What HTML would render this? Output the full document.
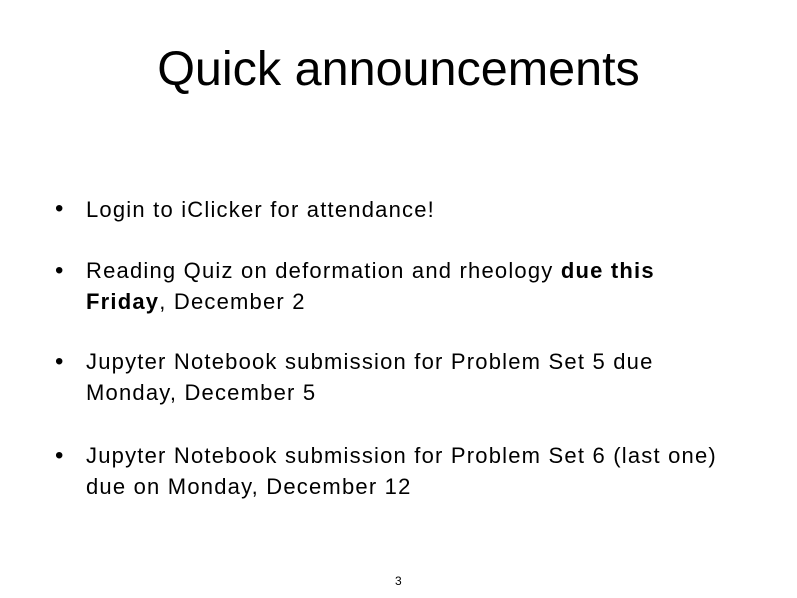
<!DOCTYPE html>
<html><head><meta charset="utf-8"><style>
html,body{margin:0;padding:0;background:#fff;}
body{width:797px;height:598px;position:relative;overflow:hidden;color:#000;}
.title{position:absolute;left:0;width:797px;top:41px;text-align:center;font-family:"Liberation Sans",sans-serif;font-size:48.5px;line-height:56px;}
.b{position:absolute;left:86px;font-family:"Liberation Sans",sans-serif;font-size:22px;letter-spacing:1.2px;line-height:31px;width:700px;}
.dot{position:absolute;left:55px;font-family:"Liberation Sans",sans-serif;font-size:24px;}
.pn{position:absolute;left:395px;top:574px;font-family:"Liberation Sans",sans-serif;font-size:12px;}
</style></head><body>
<div class="title">Quick announcements</div>
<div class="dot" style="top:195px">•</div>
<div class="b" style="top:194px">Login to iClicker for attendance!</div>
<div class="dot" style="top:257px">•</div>
<div class="b" style="top:255px">Reading Quiz on deformation and rheology <b>due this<br>Friday</b>, December 2</div>
<div class="dot" style="top:348px">•</div>
<div class="b" style="top:346px">Jupyter Notebook submission for Problem Set 5 due<br>Monday, December 5</div>
<div class="dot" style="top:442px">•</div>
<div class="b" style="top:440px">Jupyter Notebook submission for Problem Set 6 (last one)<br>due on Monday, December 12</div>
<div class="pn">3</div>
</body></html>
